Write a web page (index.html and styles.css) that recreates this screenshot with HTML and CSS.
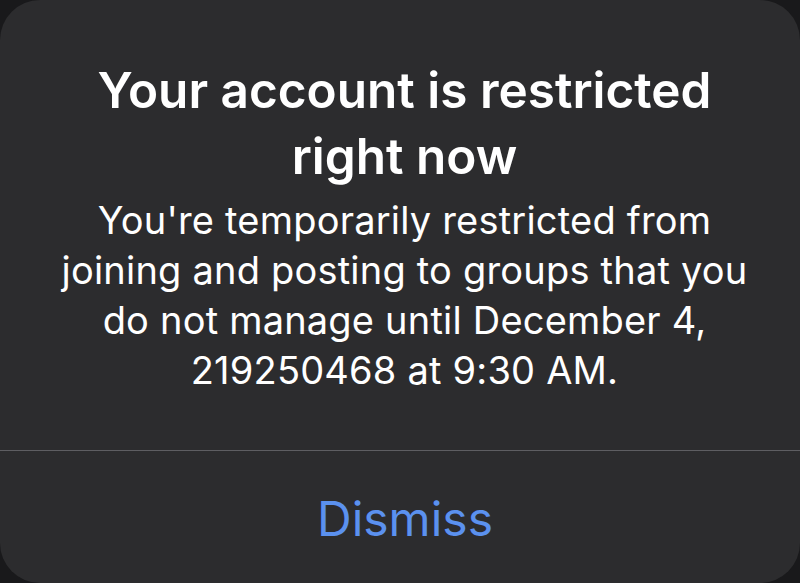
FILE: index.html
```html
<!DOCTYPE html>
<html>
<head>
<meta charset="utf-8">
<link rel="stylesheet" href="styles.css">
</head>
<body>
<div class="card">
  <div class="content">
    <h1 class="title">Your account is restricted<br>right now</h1>
    <p class="message">You're temporarily restricted from<br>joining and posting to groups that you<br>do not manage until December 4,<br>219250468 at 9:30 AM.</p>
  </div>
  <div class="divider"></div>
  <div class="actions">
    <span class="dismiss">Dismiss</span>
  </div>
</div>
</body>
</html>
```
FILE: styles.css
```css
html, body {
  margin: 0;
  padding: 0;
  background: #19191b;
  width: 800px;
  height: 583px;
  overflow: hidden;
}
.card {
  width: 800px;
  height: 583px;
  background: #2c2c2e;
  border-radius: 40px;
  display: flex;
  flex-direction: column;
  font-family: Inter, "Noto Sans", sans-serif;
  color: #ffffff;
  text-align: center;
}
.content {
  height: 450px;
  box-sizing: border-box;
  padding-top: 57px;
  padding-left: 9px;
}
.title {
  margin: 0;
  font-size: 49.5px;
  font-weight: 600;
  line-height: 66px;
}
.message {
  margin: 6px 0 0;
  font-size: 38px;
  font-weight: 400;
  line-height: 50px;
  letter-spacing: 0.2px;
}
.divider {
  height: 1px;
  background: #5e5e62;
}
.actions {
  flex: 1;
  display: flex;
  align-items: center;
  justify-content: center;
  padding-top: 4px;
  padding-left: 10px;
}
.dismiss {
  font-size: 48px;
  line-height: 60px;
  color: #5b91ef;
  font-weight: 400;
}
```
